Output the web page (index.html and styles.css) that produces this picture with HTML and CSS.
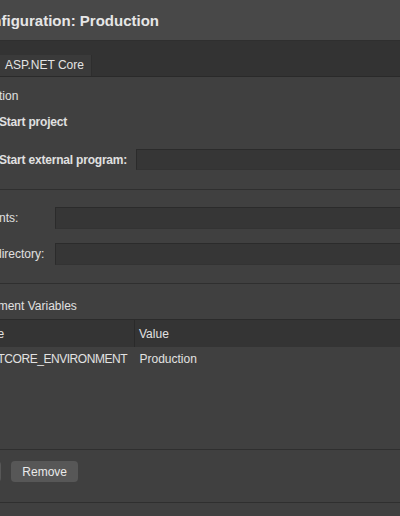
FILE: index.html
```html
<!DOCTYPE html>
<html>
<head>
<meta charset="utf-8">
<title>Run Configuration</title>
<link rel="stylesheet" href="styles.css">
</head>
<body>
<div class="dialog">
  <header class="titlebar">
    <h1 class="title">Run Configuration: Production</h1>
  </header>
  <nav class="tabs">
    <span class="tab">ASP.NET Core</span>
  </nav>
  <main class="content">
    <section class="start">
      <div class="section-label">Start Action</div>
      <label class="radio"><span class="dot checked"></span>Start project</label>
      <div class="radio-row">
        <label class="radio"><span class="dot"></span>Start external program:</label>
        <div class="input"></div>
      </div>
    </section>
    <hr class="sep sep-a">
    <section class="fields">
      <label class="field-label">Arguments:</label>
      <div class="input"></div>
      <label class="field-label">Run in directory:</label>
      <div class="input"></div>
    </section>
    <hr class="sep sep-b">
    <section class="env">
      <div class="section-label">Environment Variables</div>
      <div class="list">
        <table class="vars">
          <thead>
            <tr><th class="col-name">Variable</th><th>Value</th></tr>
          </thead>
          <tbody>
            <tr><td class="var-name">ASPNETCORE_ENVIRONMENT</td><td>Production</td></tr>
          </tbody>
        </table>
      </div>
      <div class="buttons">
        <button class="btn">Add</button>
        <button class="btn">Remove</button>
      </div>
    </section>
    <hr class="sep sep-c">
  </main>
</div>
</body>
</html>
```
FILE: styles.css
```css
html, body {
  margin: 0;
  padding: 0;
  background: #404040;
  overflow: hidden;
}
body {
  width: 400px;
  height: 516px;
  font-family: "Liberation Sans", Arial, sans-serif;
  font-size: 12px;
  color: #e0e0e0;
}
.dialog {
  margin-left: -80px;
  width: 540px;
}
.titlebar {
  height: 40px;
  background: #484848;
  border-bottom: 1px solid #2f2f2f;
}
.title {
  margin: 0;
  padding-left: 19px;
  padding-top: 1px;
  font-size: 15px;
  font-weight: bold;
  line-height: 40px;
  height: 39px;
  color: #e6e6e6;
}
.tabs {
  height: 35px;
  background: #333333;
  border-bottom: 1px solid #2a2a2a;
  display: flex;
  align-items: flex-end;
  padding-left: 70px;
}
.tab {
  display: block;
  height: 21px;
  line-height: 21px;
  padding: 0 7px 0 15px;
  background: #3a3a3a;
  border-right: 1px solid #2e2e2e;
  color: #e4e4e4;
  font-size: 12px;
}
.content {
  padding-left: 37px;
  padding-top: 11px;
}
.section-label {
  line-height: 16px;
}
.radio {
  display: flex;
  align-items: center;
  gap: 7px;
  font-weight: bold;
  letter-spacing: -0.2px;
  line-height: 16px;
  padding-left: 21px;
  white-space: nowrap;
}
.start > .radio {
  margin-top: 10px;
}
.dot {
  width: 14px;
  height: 14px;
  border-radius: 50%;
  background: #5a5a5a;
  box-sizing: border-box;
}
.dot.checked {
  background: #2f7cf6;
  border: 4px solid #2f7cf6;
  box-shadow: inset 0 0 0 3px #fff;
}
.radio-row {
  margin-top: 19px;
  display: flex;
  align-items: center;
  gap: 9px;
}
.radio-row .input {
  flex: 1;
  height: 21px;
}
.input {
  box-sizing: border-box;
  height: 22px;
  background: #363636;
  border: 1px solid #2b2b2b;
  border-bottom-color: #333;
}
.sep {
  margin: 0;
  border: 0;
  height: 1px;
  background: #2f2f2f;
}
.sep-a { margin-top: 19px; }
.sep-b { margin-top: 18px; }
.sep-c { margin-top: 20px; }
.fields {
  margin-top: 17px;
  display: grid;
  grid-template-columns: 98px 1fr;
  row-gap: 14px;
  align-items: center;
}
.field-label {
  line-height: 16px;
}
.env {
  margin-top: 14px;
}
.list {
  margin-top: 5px;
  height: 129px;
  border-top: 1px solid #2b2b2b;
  border-bottom: 1px solid #2f2f2f;
}
.vars {
  width: 100%;
  border-collapse: collapse;
  table-layout: fixed;
}
.vars th {
  height: 27px;
  padding: 0 0 0 4px;
  background: #343434;
  font-weight: normal;
  text-align: left;
  color: #e2e2e2;
}
.vars th.col-name {
  width: 173px;
  border-right: 1px solid #2a2a2a;
}
.vars td {
  height: 24px;
  padding: 0 0 0 5px;
  white-space: nowrap;
  overflow: hidden;
  color: #e2e2e2;
}
.vars td.var-name {
  padding-left: 2px;
  letter-spacing: -0.45px;
}
.buttons {
  margin-top: 11px;
  margin-left: 1px;
  display: flex;
  gap: 10px;
}
.btn {
  height: 21px;
  padding: 0 11px;
  border: 0;
  border-radius: 4px;
  background: #575757;
  color: #eaeaea;
  font-family: inherit;
  font-size: 12px;
}
```
